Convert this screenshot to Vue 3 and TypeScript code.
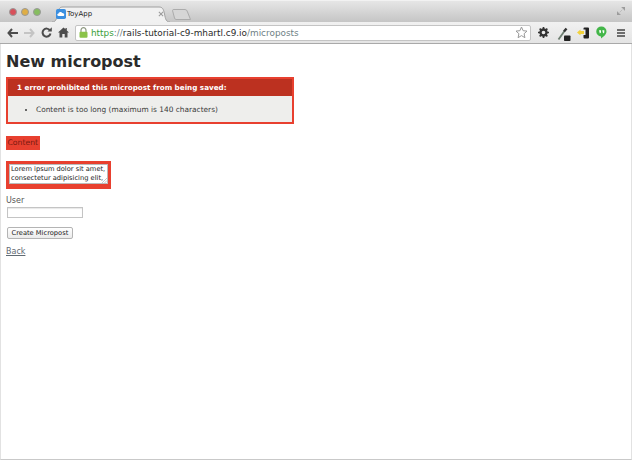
<script setup lang="ts">
const title: string = 'New micropost'
</script>

<template>
  <div class="window">
    <div class="tabstrip">
      <div class="lights">
        <span class="light red"></span>
        <span class="light amber"></span>
        <span class="light green"></span>
      </div>
      <div class="tab">
        <svg class="tabshape" width="118" height="16" viewBox="0 0 118 16">
          <path d="M0 16 C4 16 4.500 13 5.500 8 C6.500 3 7.500 1 11 1 L107 1 C110.500 1 111.500 3 112.500 8 C113.500 13 114 16 118 16 Z" fill="#f1f1f1"/>
          <path d="M0 16 C4 16 4.500 13 5.500 8 C6.500 3 7.500 1 11 1 L107 1 C110.500 1 111.500 3 112.500 8 C113.500 13 114 16 118 16" fill="none" stroke="#a0a0a0" stroke-width="1"/>
        </svg>
        <svg class="favicon" width="10" height="10" viewBox="0 0 12 12">
          <rect width="12" height="12" rx="2" fill="#3b8fe0"/>
          <path d="M3 8.500 C1 8.500 1 5.500 3 5.500 C3.500 3.500 6.500 3 7.500 4.800 C10 4.500 11 8.500 8.500 8.500 Z" fill="#fff"/>
        </svg>
        <span class="tabtitle">ToyApp</span>
        <svg class="tabclose" width="6" height="6" viewBox="0 0 7 7">
          <path d="M1 1 L6 6 M6 1 L1 6" stroke="#9a9a9a" stroke-width="1.200"/>
        </svg>
      </div>
      <svg class="newtab" width="19" height="11" viewBox="0 0 19 11">
        <path d="M0.500 1.500 Q0.500 0.500 2 0.500 L13 0.500 Q15 0.500 15.500 3 L18.500 10.500 L4 10.500 Q3 10.500 2.500 9 Z" fill="#d6d6d6" stroke="#ababab"/>
      </svg>
      <svg class="expand" width="8" height="8" viewBox="0 0 9 9">
        <path d="M5 0 H9 V4 Z M0 5 V9 H4 Z M3 6 L6 3" fill="#9c9c9c" stroke="#9c9c9c" stroke-width="0.500"/>
      </svg>
    </div>

    <div class="toolbar">
      <svg class="navicon" width="11" height="10" viewBox="0 0 11 10">
        <path d="M5 1 L1.500 5 L5 9 M2 5 H11" fill="none" stroke="#4c4c4c" stroke-width="2"/>
      </svg>
      <svg class="navicon" width="11" height="10" viewBox="0 0 11 10">
        <path d="M6 1 L9.500 5 L6 9 M9 5 H0" fill="none" stroke="#c4c4c4" stroke-width="2"/>
      </svg>
      <svg class="navicon" width="11" height="11" viewBox="0 0 11 11">
        <path d="M9 3.500 A4 4 0 1 0 9.500 6.500" fill="none" stroke="#4c4c4c" stroke-width="2"/>
        <path d="M6.500 4.500 H10.800 V0.200 Z" fill="#4c4c4c"/>
      </svg>
      <svg class="navicon" width="11" height="11" viewBox="0 0 11 11">
        <path d="M5.500 0.500 L0 5.500 H1.500 V10.500 H4.300 V7 H6.700 V10.500 H9.500 V5.500 H11 L8.800 3.500 V1 H7.500 V2.300 Z" fill="#4c4c4c"/>
      </svg>
      <div class="omnibox">
        <svg class="lock" width="9" height="11" viewBox="0 0 9 11">
          <path d="M2 5 V3.200 A2.500 2.500 0 0 1 7 3.200 V5" fill="none" stroke="#8f9a83" stroke-width="1.200"/>
          <rect x="0.500" y="4.800" width="8" height="6" rx="1" fill="#8bc34a"/>
        </svg>
        <span class="url"><span class="https">https</span><span class="muted">://</span>rails-tutorial-c9-mhartl.c9.io<span class="muted">/microposts</span></span>
        <svg class="star" width="13" height="13" viewBox="0 0 13 13">
          <path d="M6.500 1 L8.100 4.700 L12 5.100 L9.100 7.700 L9.900 11.700 L6.500 9.600 L3.100 11.700 L3.900 7.700 L1 5.100 L4.900 4.700 Z" fill="#fff" stroke="#9a9a9a"/>
        </svg>
      </div>
      <div class="extensions">
        <svg class="gear" width="11" height="11" viewBox="0 0 12 12">
          <circle cx="6" cy="6" r="3.300" fill="none" stroke="#333" stroke-width="2.600"/>
          <path d="M6 0 V2.500 M6 9.500 V12 M0 6 H2.500 M9.500 6 H12 M1.800 1.800 L3.500 3.500 M8.500 8.500 L10.200 10.200 M10.200 1.800 L8.500 3.500 M3.500 8.500 L1.800 10.200" stroke="#333" stroke-width="1.800"/>
        </svg>
        <svg class="brush" width="16" height="16" viewBox="0 0 16 16">
          <path d="M1.500 14.500 L7.500 6" stroke="#6d7d70" stroke-width="1.800"/>
          <path d="M7 6.500 L9.500 3.500" stroke="#333" stroke-width="2.400"/>
          <rect x="7" y="10.500" width="6.500" height="5.500" rx="0.800" fill="#222"/>
        </svg>
        <svg class="phone" width="14" height="14" viewBox="0 0 14 14">
          <path d="M1 6.500 L4.500 3.500 V5 H8 V8 H4.500 V9.500 Z" fill="#f2d23c"/>
          <path d="M8.500 1.500 H12 Q13 1.500 13 2.500 V11.500 Q13 12.500 12 12.500 H8.500 Q7.500 12.500 7.500 11.500 V9 H9.500 V3.500 H7.500 V2.500 Q7.500 1.500 8.500 1.500 Z" fill="#222"/>
        </svg>
        <svg class="hangouts" width="11" height="13" viewBox="0 0 11 13">
          <path d="M5.500 0.500 A5 5 0 0 1 10.500 5.500 C10.500 8.500 7.500 10.500 5 12.500 L5 10.500 A5 5 0 0 1 5.500 0.500 Z" fill="#43b649"/>
          <path d="M3 4.300 H5 V6.500 L3.800 7.500 Z M6.300 4.300 H8.300 V6.500 L7.100 7.500 Z" fill="#fff"/>
        </svg>
        <svg class="menu" width="8" height="8" viewBox="0 0 8 8">
          <path d="M0 1 H8 M0 4 H8 M0 7 H8" stroke="#444" stroke-width="1.600"/>
        </svg>
      </div>
    </div>

    <main class="page">
      <h1>{{ title }}</h1>
      <div class="error-box">
        <h2>1 error prohibited this micropost from being saved:</h2>
        <ul>
          <li>Content is too long (maximum is 140 characters)</li>
        </ul>
      </div>
      <label class="field-error content-label">Content</label>
      <div class="field-error textarea-wrap">
        <div class="textarea">Lorem ipsum dolor sit amet,<br>consectetur adipisicing elit,
          <svg class="grip" width="5" height="5" viewBox="0 0 6 6">
            <path d="M0 6 L6 0 M3 6 L6 3" stroke="#aaa" stroke-width="0.800"/>
          </svg>
        </div>
      </div>
      <label class="user-label">User</label>
      <div class="input"></div>
      <button class="submit" type="button">Create Micropost</button>
      <a class="back" href="#">Back</a>
    </main>
  </div>
</template>

<style>
html, body { margin: 0; background: #fff; overflow: hidden; }
</style>

<style scoped>
.window {
  width: 632px;
  height: 460px;
  box-sizing: border-box;
  display: flex;
  flex-direction: column;
  font-family: "DejaVu Sans", sans-serif;
  overflow: hidden;
}
.tabstrip {
  height: 22px;
  flex: none;
  box-sizing: border-box;
  display: flex;
  align-items: flex-end;
  padding-left: 9px;
  padding-right: 7px;
  background: linear-gradient(#e6e6e6, #c5c5c5);
  border-top: 1px solid #f2f2f2;
}
.lights {
  display: flex;
  gap: 4px;
  align-self: flex-start;
  margin-top: 7px;
}
.light {
  width: 8px;
  height: 8px;
  border-radius: 50%;
  border: 0.5px solid #999;
  box-sizing: border-box;
}
.red { background: #d8505a; }
.amber { background: #dfae45; }
.green { background: #86bd5f; }
.tab {
  width: 118px;
  height: 16px;
  margin-left: 11px;
  position: relative;
  display: flex;
  align-items: center;
  color: #222;
}
.tabshape { position: absolute; left: 0; top: 0; }
.favicon { position: relative; margin-left: 4px; flex: none; }
.tabtitle { position: relative; margin-left: 1px; font-size: 7px; }
.tabclose { position: relative; margin-left: auto; margin-right: 6px; }
.newtab { margin-left: 2px; margin-bottom: 2px; }
.expand { margin-left: auto; margin-bottom: 7px; }
.toolbar {
  height: 22px;
  flex: none;
  box-sizing: border-box;
  display: flex;
  align-items: center;
  padding-left: 7px;
  background: linear-gradient(#f1f1f1, #e4e4e4);
  border-bottom: 1px solid #a9a9a9;
}
.navicon { margin-right: 6px; flex: none; }
.omnibox {
  width: 456px;
  height: 16px;
  box-sizing: border-box;
  background: #fff;
  border: 1px solid #c4c4c4;
  border-radius: 2px;
  display: flex;
  align-items: center;
  padding-left: 3px;
  padding-right: 2px;
}
.lock { flex: none; }
.url {
  margin-left: 3px;
  font-size: 8.900px;
  color: #2a2a2a;
  white-space: nowrap;
}
.https { color: #3aa03a; }
.muted { color: #6f7f85; }
.star { margin-left: auto; }
.extensions {
  display: flex;
  align-items: center;
  margin-left: 7px;
}
.brush { margin-left: 8px; }
.phone { margin-left: 3px; }
.hangouts { margin-left: 6px; }
.menu { margin-left: 10px; }
.page {
  flex: 1;
  min-height: 0;
  box-sizing: border-box;
  padding: 7px 5px 0;
  border-left: 1px solid #e2e2e2;
  border-right: 1px solid #e2e2e2;
  border-bottom: 1px solid #c9c9c9;
  color: #333;
  font-size: 8px;
  display: flex;
  flex-direction: column;
  align-items: flex-start;
}
h1 {
  margin: 0;
  font-size: 16px;
  line-height: 22px;
  font-weight: 700;
  color: #2b2b2b;
}
.error-box {
  width: 288px;
  box-sizing: border-box;
  margin-top: 4px;
  border: 2px solid #e8402f;
  background: #eeeeec;
}
h2 {
  margin: 0;
  height: 17px;
  line-height: 17px;
  background: #bc3120;
  color: #fff;
  font-size: 7.200px;
  font-weight: 700;
  padding-left: 9px;
  box-sizing: border-box;
}
ul { margin: 0; padding: 8px 0 7px 28px; list-style: disc; }
li { font-size: 7.400px; line-height: 11px; color: #3a3a3a; }
.field-error { background: #e8402f; }
.content-label {
  margin-top: 12px;
  padding: 0 1.500px;
  height: 14px;
  line-height: 14px;
  color: #7a1a10;
  font-size: 7.700px;
}
.textarea-wrap {
  margin-top: 11px;
  padding: 3px 3px 5px;
}
.textarea {
  width: 95px;
  height: 18px;
  background: #fff;
  border: 1px solid #bbb;
  padding: 0 1px;
  font-size: 6.700px;
  line-height: 9px;
  color: #222;
  white-space: nowrap;
  position: relative;
}
.grip { position: absolute; right: 0; bottom: 0; }
.user-label {
  margin-top: 6px;
  line-height: 12px;
  font-size: 8px;
  color: #555;
}
.input {
  width: 74px;
  height: 9px;
  margin: 0 0 0 1px;
  border: 1px solid #c4c4c4;
  box-shadow: inset 0 1px 1px #e8e8e8;
  background: #fff;
}
.submit {
  margin: 9px 0 0 1px;
  height: 12px;
  box-sizing: border-box;
  padding: 0 3.500px;
  border: 1px solid #b4b4b4;
  border-radius: 2px;
  background: linear-gradient(#fff, #ebebeb);
  font-family: "DejaVu Sans", sans-serif;
  font-size: 6.700px;
  line-height: 10px;
  color: #222;
}
.back {
  margin-top: 7px;
  color: #5f6a73;
  font-size: 8px;
  line-height: 12px;
}
</style>
